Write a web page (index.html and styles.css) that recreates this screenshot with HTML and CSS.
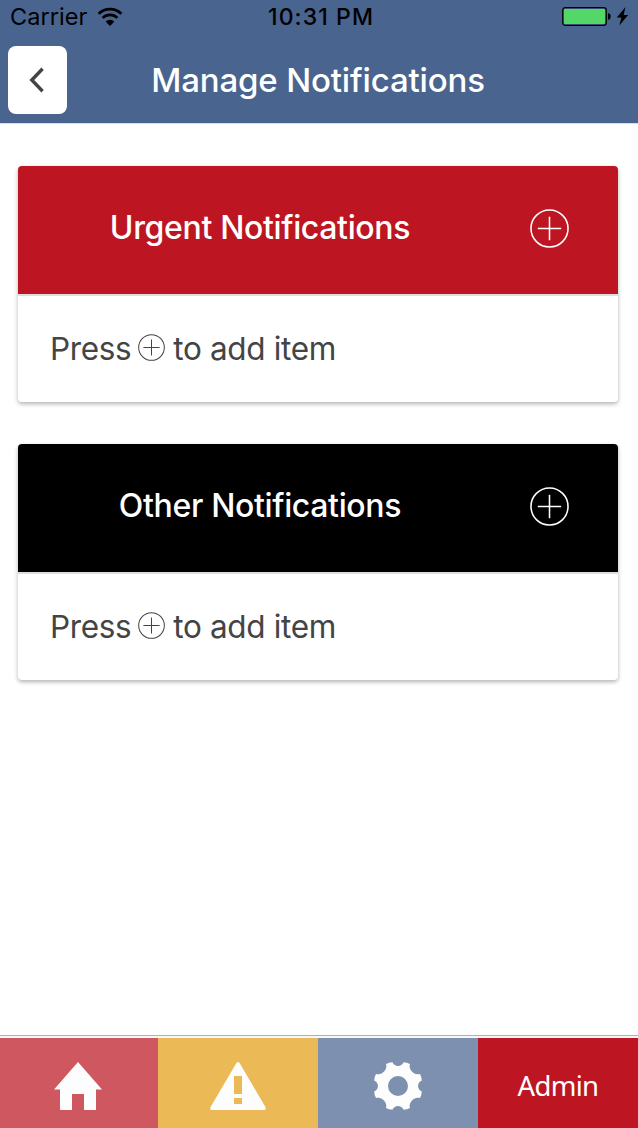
FILE: index.html
```html
<!DOCTYPE html>
<html lang="en">
<head>
<meta charset="utf-8">
<title>Manage Notifications</title>
<link rel="stylesheet" href="styles.css">
</head>
<body>
<svg class="defs" width="0" height="0" aria-hidden="true">
  <symbol id="add" viewBox="0 0 40 40">
    <circle cx="20" cy="20" r="19"/>
    <path d="M20 8v24M8 20h24"/>
  </symbol>
</svg>
<div class="app">
  <header class="header">
    <div class="status">
      <div class="status-left">
        <span class="carrier">Carrier</span>
        <svg class="wifi" width="26" height="20" viewBox="0 0 26 20">
          <g fill="none" stroke="#000" stroke-width="2.7">
            <path d="M1.6 6.8a16.4 16.4 0 0 1 22.8 0"/>
            <path d="M5.6 10.9a10.6 10.6 0 0 1 14.8 0"/>
          </g>
          <path d="M8.6 14.5a6.3 6.3 0 0 1 8.8 0L13 19z"/>
        </svg>
      </div>
      <span class="time">10:31 PM</span>
      <svg class="battery" width="68" height="22" viewBox="0 0 68 22">
        <rect x=".7" y="1.7" width="43.6" height="17.6" rx="2.5" fill="none" stroke="#000" stroke-width="1.2"/>
        <rect x="2" y="3" width="41" height="15" rx="1" fill="#53d769"/>
        <path d="M46 7.2c3.6 0 3.6 6.6 0 6.6z"/>
        <path d="M63.5 1L54.8 11.5h4.6L57.3 19.5 66.2 9h-4.6z"/>
      </svg>
    </div>
    <div class="navbar">
      <button class="back" aria-label="Back">
        <svg width="18" height="28" viewBox="0 0 18 28"><path d="M14.6 2.8L3.8 14l10.8 11.2" fill="none" stroke="#444" stroke-width="3.4"/></svg>
      </button>
      <h1 class="title">Manage Notifications</h1>
    </div>
  </header>
  <main class="content">
    <section class="card">
      <div class="card-head urgent">
        <h2 class="card-title">Urgent Notifications</h2>
        <svg class="add-large"><use href="#add"/></svg>
      </div>
      <p class="card-body"><span class="press">Press</span><svg class="add-small"><use href="#add"/></svg><span class="rest">to add item</span></p>
    </section>
    <section class="card">
      <div class="card-head other">
        <h2 class="card-title">Other Notifications</h2>
        <svg class="add-large"><use href="#add"/></svg>
      </div>
      <p class="card-body"><span class="press">Press</span><svg class="add-small"><use href="#add"/></svg><span class="rest">to add item</span></p>
    </section>
  </main>
  <nav class="tabs">
    <a class="tab home"><svg width="48" height="48" viewBox="0 0 48 48"><path d="M24 0L0 27.6h6V48h12V32h12v16h12V27.6h6z"/></svg></a>
    <a class="tab alerts"><svg width="56" height="48" viewBox="0 0 56 48"><path fill-rule="evenodd" d="M26.4 1Q28-1 29.6 1L55.7 45.5Q56.2 48 54.5 48H1.5Q-.2 48 .3 45.5zM24 14v18h8V14zM24 36v6h8v-6z"/></svg></a>
    <a class="tab settings"><svg width="48" height="48" viewBox="0 0 48 48"><path fill-rule="evenodd" d="M18.5.2C20.500 5.200 27.500 5.200 29.500.2Q33 .3 36 2C34 7.500 40.500 14 46 12Q47.700 15 47.800 18.500C42.800 20.500 42.800 27.500 47.800 29.500Q47.700 33 46 36C40.500 34 34 40.500 36 46Q33 47.700 29.500 47.800C27.500 42.800 20.500 42.800 18.500 47.800Q15 47.700 12 46C14 40.500 7.500 34 2 36Q.3 33 .2 29.500C5.200 27.500 5.200 20.500.2 18.500Q.3 15 2 12C7.500 14 14 7.500 12 2Q15 .3 18.500.2zM24 14a10 10 0 1 0 0 20a10 10 0 1 0 0-20z"/></svg></a>
    <a class="tab admin">Admin</a>
  </nav>
</div>
</body>
</html>
```
FILE: styles.css
```css
* { box-sizing: border-box; }
body, h1, h2, p { margin: 0; }
body { font-family: Inter, "Liberation Sans", sans-serif; background: #fff; }
.defs { display: block; }
.app { display: flex; flex-direction: column; width: 638px; height: 1128px; overflow: hidden; }
.header { height: 124px; background: #49648e; border-bottom: 1px solid #d4dce8; }
.status { display: grid; grid-template-columns: 1fr auto 1fr; align-items: center; height: 34px; padding: 0 6px 0 10px; color: #000; }
.status-left { display: flex; align-items: center; gap: 10px; }
.carrier { font-size: 23.5px; letter-spacing: .05px; margin-bottom: 1px; }
.wifi { margin-bottom: 1px; }
.time { font-size: 23px; font-weight: 550; letter-spacing: 1.1px; }
.battery { justify-self: end; margin-right: 2px; }
.navbar { display: grid; grid-template-columns: 59px 1fr 59px; align-items: center; height: 92px; padding: 0 8px; }
.back { display: flex; align-items: center; justify-content: center; width: 59px; height: 68px; padding: 0 1px 0 0; border: 0; border-radius: 8px; background: #fff; }
.title { padding-right: 2px; font-size: 33px; font-weight: 480; line-height: 40px; letter-spacing: -.15px; text-align: center; color: #fff; white-space: nowrap; }
.content { flex: 1; display: flex; flex-direction: column; gap: 42px; padding: 42px 20px 0 18px; }
.card { width: 600px; height: 236px; border-radius: 4px; overflow: hidden; background: #fff; box-shadow: 0 2px 4px rgba(0,0,0,.3); }
.card-head { display: flex; align-items: center; height: 130px; padding: 0 49px 4px 32px; border-bottom: 2px solid #dedede; }
.urgent { background: #bd1622; background-clip: padding-box; }
.other { background: #000; background-clip: padding-box; }
.card-title { flex: 1; margin-right: 60px; padding-bottom: 1px; font-size: 32px; font-weight: 480; line-height: 40px; letter-spacing: -.35px; text-align: center; white-space: nowrap; color: #fff; }
.add-large { width: 39px; height: 39px; fill: none; stroke: #fff; stroke-width: 1.6; }
.card-body { display: flex; align-items: center; height: 106px; padding: 0 32px 2px; font-size: 31.5px; letter-spacing: -.35px; color: #444; }
.add-small { width: 27px; height: 27px; margin: 0 8px 1px 7px; fill: none; stroke: #444; stroke-width: 1.5; }
.tabs { display: grid; grid-template-columns: 158px 160px 160px 160px; height: 93px; padding-top: 2px; border-top: 1px solid #b0b0b0; background: #f8f8f8; }
.tab { display: flex; align-items: center; justify-content: center; padding-top: 6px; }
.tab svg { fill: #fdfdfd; }
.home { background: #cf575f; padding-right: 2px; }
.alerts { background: #ebb955; }
.settings { background: #7d90af; }
.admin { padding-top: 4px; background: #bd1622; color: #fff; font-family: "Noto Sans", sans-serif; font-size: 27.5px; letter-spacing: -.7px; }
```
